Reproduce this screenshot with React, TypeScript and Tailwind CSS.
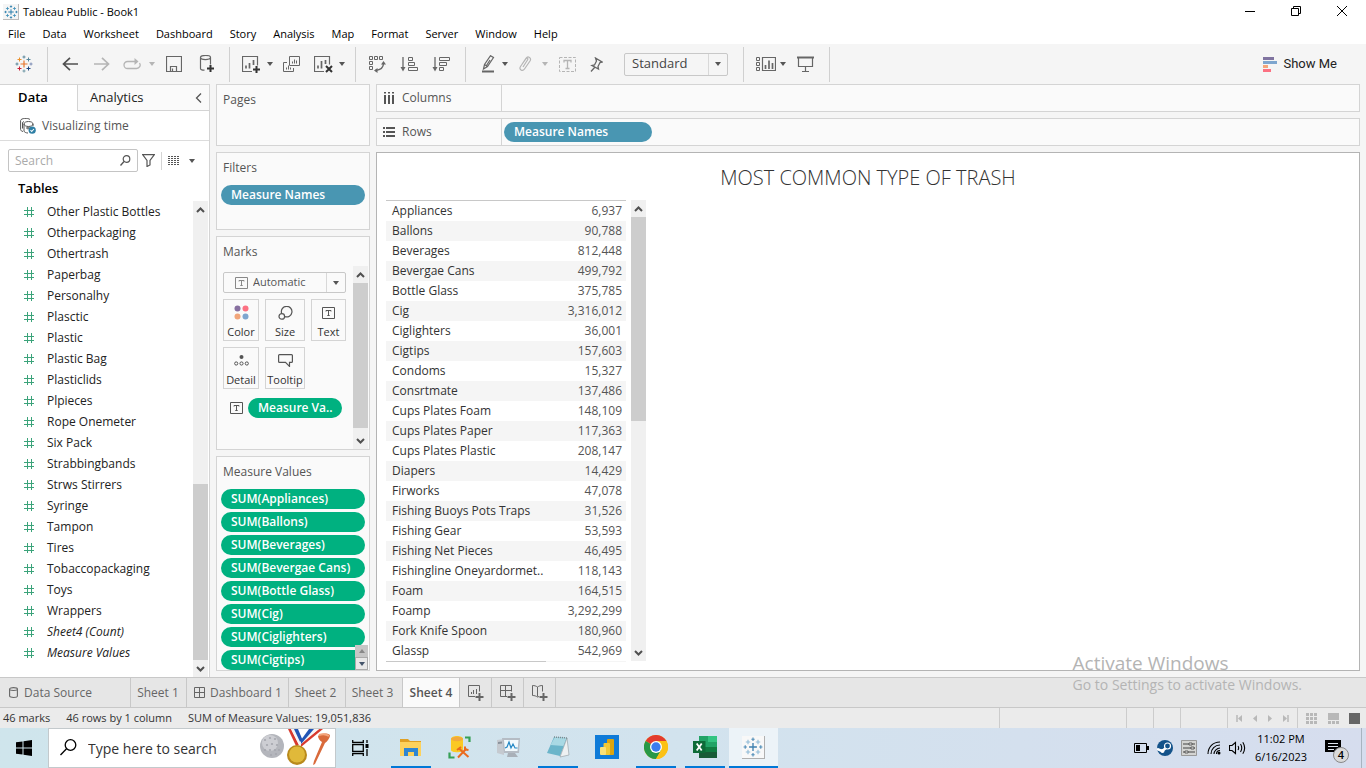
import React from "react";

const FIELDS = [
  "Other Plastic Bottles", "Otherpackaging", "Othertrash", "Paperbag", "Personalhy", "Plasctic", "Plastic",
  "Plastic Bag", "Plasticlids", "Plpieces", "Rope Onemeter", "Six Pack", "Strabbingbands", "Strws Stirrers",
  "Syringe", "Tampon", "Tires", "Tobaccopackaging", "Toys", "Wrappers",
];
const CALC_FIELDS = ["Sheet4 (Count)", "Measure Values"];

const ROWS: [string, string][] = [
  ["Appliances", "6,937"], ["Ballons", "90,788"], ["Beverages", "812,448"], ["Bevergae Cans", "499,792"],
  ["Bottle Glass", "375,785"], ["Cig", "3,316,012"], ["Ciglighters", "36,001"], ["Cigtips", "157,603"],
  ["Condoms", "15,327"], ["Consrtmate", "137,486"], ["Cups Plates Foam", "148,109"],
  ["Cups Plates Paper", "117,363"], ["Cups Plates Plastic", "208,147"], ["Diapers", "14,429"],
  ["Firworks", "47,078"], ["Fishing Buoys Pots Traps", "31,526"], ["Fishing Gear", "53,593"],
  ["Fishing Net Pieces", "46,495"], ["Fishingline Oneyardormet..", "118,143"], ["Foam", "164,515"],
  ["Foamp", "3,292,299"], ["Fork Knife Spoon", "180,960"], ["Glassp", "542,969"],
];

const MEASURES = ["Appliances", "Ballons", "Beverages", "Bevergae Cans", "Bottle Glass", "Cig", "Ciglighters", "Cigtips"];
const MENUS = ["File", "Data", "Worksheet", "Dashboard", "Story", "Analysis", "Map", "Format", "Server", "Window", "Help"];

type IconProps = { w: number; h: number; children: React.ReactNode; className?: string };
function Icon({ w, h, children, className = "" }: IconProps) {
  return (
    <svg width={w} height={h} viewBox={`0 0 ${w} ${h}`} fill="none" stroke="currentColor" aria-hidden="true" className={`shrink-0 ${className}`}>
      {children}
    </svg>
  );
}

function Caret({ className = "text-[#555]" }: { className?: string }) {
  return (
    <Icon w={6} h={4} className={className}>
      <path d="M0 0h6L3 4z" fill="currentColor" stroke="none" />
    </Icon>
  );
}

function Tool({ label, className, children }: { label: string; className: string; children: React.ReactNode }) {
  return (
    <button type="button" aria-label={label} className={`flex h-8 shrink-0 items-center justify-center ${className}`}>
      {children}
    </button>
  );
}

function Sep({ className = "" }: { className?: string }) {
  return <span className={`h-[35px] w-px shrink-0 bg-[#d0d0d0] ${className}`} />;
}

function Sparkle({ size, colors }: { size: number; colors: string[] }) {
  const [c, t, tr, r, br, b, bl, l, tl] = colors;
  return (
    <svg width={size} height={size} viewBox="0 0 18 18" fill="none" strokeWidth="1" aria-hidden="true" className="shrink-0">
      <path d="M9 5.500v7M5.500 9h7" stroke={c} strokeWidth="1.200" />
      <path d="M9 .5v3M7.500 2h3" stroke={t} />
      <path d="M13.500 2.500v4M11.500 4.500h4" stroke={tr} />
      <path d="M16 7.500v3M14.500 9h3" stroke={r} />
      <path d="M13.500 11.500v4M11.500 13.500h4" stroke={br} />
      <path d="M9 14.500v3M7.500 16h3" stroke={b} />
      <path d="M4.500 11.500v4M2.500 13.500h4" stroke={bl} />
      <path d="M2 7.500v3M.5 9h3" stroke={l} />
      <path d="M4.500 2.500v4M2.500 4.500h4" stroke={tl} />
    </svg>
  );
}

function TextIcon({ className = "text-[#555]" }: { className?: string }) {
  return (
    <Icon w={13} h={12} className={className}>
      <path d="M.5.5h12v11H.5z" />
      <path d="M4 4.500V3.500h5v1M6.500 3.500v5M5.300 8.500h2.400" />
    </Icon>
  );
}

function Chevron({ dir }: { dir: "up" | "down" }) {
  return (
    <Icon w={9} h={6} className="text-[#505050]">
      <path d={dir === "up" ? "M1 5l3.500-3.500L8 5" : "M1 1l3.500 3.500L8 1"} strokeWidth="2" />
    </Icon>
  );
}

function ScrollBar({ before = "grow-0", thumb, after = "grow-0" }: { before?: string; thumb: string; after?: string }) {
  return (
    <div className="flex w-[15px] shrink-0 flex-col bg-[#f0f0f0]">
      <button type="button" aria-label="Scroll up" className="flex h-[17px] shrink-0 items-center justify-center"><Chevron dir="up" /></button>
      <div className="flex min-h-0 flex-1 flex-col">
        <div className={before} />
        <div className={`bg-[#cdcdcd] ${thumb}`} />
        <div className={after} />
      </div>
      <button type="button" aria-label="Scroll down" className="flex h-[17px] shrink-0 items-center justify-center"><Chevron dir="down" /></button>
    </div>
  );
}

const CARD = "border border-[#d4d4d4] bg-[#fafafa]";
const PILL = "flex h-5 shrink-0 items-center rounded-full px-[10px] text-left text-xs font-semibold whitespace-nowrap text-white";

function TitleBar() {
  return (
    <header className="shrink-0 bg-white font-['Open_Sans',sans-serif] text-[11px] text-black">
      <div className="flex h-6 items-center">
        <span className="ml-[3px] flex h-4 w-4 items-center justify-center border-r border-b border-[#bbb] bg-[#f5f5f5]">
          <Sparkle size={14} colors={["#1f77a8", "#1f77a8", "#3d8fb8", "#1f77a8", "#3d8fb8", "#1f77a8", "#3d8fb8", "#1f77a8", "#3d8fb8"]} />
        </span>
        <h1 className="ml-1">Tableau Public - Book1</h1>
        <div className="ml-auto flex self-start">
          <button type="button" aria-label="Minimize" className="flex h-[22px] w-[46px] items-center justify-center"><Icon w={10} h={10}><path d="M0 5.500h10" /></Icon></button>
          <button type="button" aria-label="Restore" className="flex h-[22px] w-[45px] items-center justify-center"><Icon w={10} h={10}><path d="M.5 2.500h7v7h-7zM2.500 2.500v-2h7v7h-2" /></Icon></button>
          <button type="button" aria-label="Close" className="flex h-[22px] w-[48px] items-center justify-center"><Icon w={10} h={10}><path d="M0 0l10 10M10 0L0 10" /></Icon></button>
        </div>
      </div>
      <nav aria-label="Menu" className="flex h-5 items-center gap-[17px] px-2">
        {MENUS.map((m) => <button type="button" key={m}>{m}</button>)}
      </nav>
    </header>
  );
}

function Toolbar() {
  return (
    <div role="toolbar" className="flex h-10 shrink-0 items-center bg-[#f5f5f5] text-[#666]">
      <Tool label="Start page" className="w-[47px]">
        <Sparkle size={18} colors={["#e8762c", "#5b879b", "#59879b", "#7c8cb5", "#1f457e", "#7199a6", "#c72037", "#5b879b", "#eb912c"]} />
      </Tool>
      <Sep className="mr-[6px]" />
      <Tool label="Undo" className="w-8 text-[#505050]"><Icon w={16} h={14}><path d="M16 7H1.500M8 .8L1.500 7 8 13.200" strokeWidth="1.700" /></Icon></Tool>
      <Tool label="Redo" className="w-8 text-[#b5b5b5]"><Icon w={16} h={14}><path d="M0 7h14.500M8 .8L14.500 7 8 13.200" strokeWidth="1.700" /></Icon></Tool>
      <Tool label="Replay" className="w-7 text-[#b5b5b5]"><Icon w={18} h={12}><path d="M12 3.500H4.500a3.500 3.500 0 000 7h9a3.500 3.500 0 003-5.500" strokeWidth="1.300" /><path d="M11.500 0v7L15.500 3.500z" fill="currentColor" stroke="none" /></Icon></Tool>
      <Tool label="Replay options" className="w-3"><Caret className="text-[#b5b5b5]" /></Tool>
      <Tool label="Save" className="w-8"><Icon w={16} h={16}><path d="M.5.5h15v15H.5zM4.500 15.500v-5h6v5M6.500 12.500v3" strokeWidth="1.200" /></Icon></Tool>
      <Tool label="New data source" className="w-8"><Icon w={16} h={18}><path d="M2.500 2.500c0-2.700 10-2.700 10 0s-10 2.700-10 0v11c0 1 2 1.700 4 1.700M12.500 2.500v7" strokeWidth="1.200" /><path d="M12.500 10v7M9 13.500h7" strokeWidth="2" stroke="#333" /></Icon></Tool>
      <Sep className="mr-[5px] ml-[7px]" />
      <Tool label="New worksheet" className="w-8"><Icon w={19} h={17}><path d="M10 15.500H.5V.5h15v9" strokeWidth="1.200" /><path d="M4 12.500V9.500M7.500 12.500V7M11.500 9V4" strokeWidth="1.700" /><path d="M14.500 10v7M11 13.500h7" strokeWidth="2" stroke="#333" /></Icon></Tool>
      <Tool label="New worksheet options" className="w-[6px]"><Caret /></Tool>
      <Tool label="Duplicate" className="w-9"><Icon w={17} h={16}><path d="M6.500.5h10v9h-10zM4 6.500H.5v9h10V12" /><path d="M9.500 7.500v-2M11.500 7.500v-4M13.500 7.500v-3M3.500 13.500v-2M5.500 13.500v-4M7.500 13.500v-2" /></Icon></Tool>
      <Tool label="Clear sheet" className="w-7"><Icon w={19} h={17}><path d="M10 15.500H.5V.5h15v8" strokeWidth="1.200" /><path d="M4 12.500V9.500M7.500 12.500V5M11.500 8V4" strokeWidth="1.700" /><path d="M12 10l6 6M18 10l-6 6" strokeWidth="2" stroke="#333" /></Icon></Tool>
      <Tool label="Clear options" className="w-[10px]"><Caret /></Tool>
      <Sep className="mr-[5px] ml-2" />
      <Tool label="Swap rows and columns" className="w-8"><Icon w={17} h={17}><path d="M.5.5h3v3h-3zM5.500.5h3v3h-3zM10.500.5h3v3h-3zM.5 5.500h3v3h-3zM.5 10.500h3v3h-3z" /><path d="M14.500 7c0 4-3 7-8 7.500" strokeWidth="1.400" /><path d="M12 8.500L14.500 5 17 8.500zM8.500 12l-3.500 2.500L8.500 17z" fill="currentColor" stroke="none" /></Icon></Tool>
      <Tool label="Sort ascending" className="w-8"><Icon w={18} h={15}><path d="M3 0v11" strokeWidth="1.300" /><path d="M.5 10h5L3 14.500z" fill="currentColor" stroke="none" /><path d="M8.500.5h4v3h-4zM8.500 5.500h6v3h-6zM8.500 10.500h9v3h-9z" /></Icon></Tool>
      <Tool label="Sort descending" className="w-8"><Icon w={18} h={15}><path d="M3 0v11" strokeWidth="1.300" /><path d="M.5 10h5L3 14.500z" fill="currentColor" stroke="none" /><path d="M7.500.5h10v3h-10zM7.500 5.500h7v3h-7zM7.500 10.500h4v3h-4z" /></Icon></Tool>
      <Sep className="mx-2" />
      <Tool label="Highlight" className="w-7"><Icon w={13} h={18}><path d="M1.500 14l1-4.500L8.500.7l3 1.800-6 9L1.500 14zM2.500 9.500l3 2M8 5L4.500 10.500" strokeWidth="1.200" /><path d="M0 16.500h12" strokeWidth="2" /></Icon></Tool>
      <Tool label="Highlight options" className="w-[6px]"><Caret /></Tool>
      <Tool label="Group members" className="w-[34px] text-[#b5b5b5]"><Icon w={14} h={16}><path d="M5 11l4.500-7c1-1.500-.7-2.600-1.700-1.200L2.500 10.500c-2 3 2 5.500 4 2.500l5.500-8c1.800-3-2-5.500-4-2.700L3.500 9" strokeWidth="1.200" /></Icon></Tool>
      <Tool label="Group options" className="w-[6px]"><Caret className="text-[#b5b5b5]" /></Tool>
      <Tool label="Show mark labels" className="w-[38px] text-[#b5b5b5]"><Icon w={17} h={15}><path d="M.5.500h16v14H.5z" strokeDasharray="3 1.500" /><path d="M5 5.500V3.500h7v2M8.500 3.500v8M6.500 11.500h4" strokeWidth="1.300" /></Icon></Tool>
      <Tool label="Fix axes" className="w-5"><Icon w={13} h={15}><path d="M5.500 1l6.500 4-2 .5-2 4 .5 2.500L2 8.500l2.500-.5 2-4zM5 10l-4 4.500" strokeWidth="1.300" /></Icon></Tool>
      <div className="relative ml-[18px] flex h-[23px] w-[104px] items-center rounded-[2px] border border-[#c8c8c8]">
        <select aria-label="Fit" className="h-full w-full appearance-none bg-transparent pl-[7px] font-['Open_Sans',sans-serif] text-[13px] text-[#444]"><option>Standard</option></select>
        <span className="pointer-events-none absolute inset-y-0 right-0 flex w-[19px] items-center justify-center border-l border-[#d8d8d8]"><Caret /></span>
      </div>
      <Sep className="ml-[15px]" />
      <Tool label="Show or hide cards" className="ml-2 w-7"><Icon w={20} h={14}><path d="M.5.500h3v3h-3zM.5 5.500h3v3h-3zM.5 10.500h3v3h-3z" /><path d="M6.500.500h13v13h-13z" strokeWidth="1.200" /><path d="M9.500 12V8M13 12V3.500M16.500 12V6" strokeWidth="1.700" /></Icon></Tool>
      <Tool label="Card options" className="w-[6px]"><Caret /></Tool>
      <Tool label="Presentation mode" className="w-[38px]"><Icon w={17} h={16}><path d="M0 1.500h17" strokeWidth="2" /><path d="M1.500 2v8.500h14V2M8.500 10.500v5M5 15.500h7" strokeWidth="1.200" /></Icon></Tool>
      <Sep className="ml-[5px]" />
      <button type="button" className="mr-[29px] ml-auto flex items-center gap-[6px] font-[Roboto,sans-serif] text-[13px] text-[#222]">
        <Icon w={14} h={15}>
          <path d="M0 1.500h11" stroke="#8074a0" strokeWidth="3" /><path d="M0 5.500h14" stroke="#7ea6cf" strokeWidth="3" />
          <path d="M0 9.500h5" stroke="#f5a57a" strokeWidth="3" /><path d="M0 13.500h8" stroke="#fc7182" strokeWidth="3" />
        </Icon>
        Show Me
      </button>
    </div>
  );
}

function DataPane() {
  return (
    <aside className="flex w-[210px] shrink-0 flex-col border-t border-r border-[#d4d4d4] bg-white">
      <div className="flex h-[26px] shrink-0 text-[13px] text-black">
        <button type="button" className="w-[77px] shrink-0 pr-[11px] font-semibold">Data</button>
        <div className="flex flex-1 items-center justify-between border-b border-l border-[#d4d4d4] bg-[#fafafa] pr-[7px] pl-3">
          <button type="button" className="text-[#222]">Analytics</button>
          <button type="button" aria-label="Collapse pane"><Icon w={7} h={10} className="text-[#555]"><path d="M6 .5L1.500 5 6 9.500" strokeWidth="1.300" /></Icon></button>
        </div>
      </div>
      <div className="flex h-[30px] shrink-0 items-center gap-[6px] border-b border-[#dcdcdc] pl-5 text-xs text-[#555]">
        <Icon w={16} h={16}>
          <path d="M10 1.500C8-.2 1 0 .6 2.500v9c0 1 1 1.700 2.400 2M4 6c0-3.300 9-3.300 9 0s-9 3.300-9 0v7c0 1 2 2 4 2M13 6v2M6 10h4M8 8.500v3M4 3.500l-1.500 1v6" strokeWidth="1" />
          <circle cx="12.200" cy="12.200" r="3.600" fill="#2e7fa5" stroke="none" /><path d="M10.500 12.200l1.200 1.300 2.200-2.500" stroke="#fff" strokeWidth="1.100" />
        </Icon>
        <button type="button">Visualizing time</button>
      </div>
      <div className="flex h-[39px] shrink-0 items-center pl-2">
        <div className="relative flex">
          <input aria-label="Search" placeholder="Search" className="h-[23px] w-[130px] rounded-[2px] border border-[#c4c4c4] pr-6 pl-[6px] text-xs placeholder:text-[#aaa]" />
          <Icon w={11} h={11} className="pointer-events-none absolute top-[6px] right-[7px] text-[#555]"><circle cx="6.500" cy="4" r="3.300" strokeWidth="1.200" /><path d="M4 6.500L.5 10.500" strokeWidth="1.400" /></Icon>
        </div>
        <button type="button" aria-label="Filter fields" className="ml-1"><Icon w={13} h={13} className="text-[#555]"><path d="M.6.600h11.800L8 6.500v4.500l-3 1.500v-6z" strokeWidth="1.200" /></Icon></button>
        <span className="mx-[6px] h-[18px] w-px bg-[#d4d4d4]" />
        <button type="button" aria-label="View options" className="flex items-center gap-[9px]">
          <Icon w={12} h={9} className="text-[#555]"><path d="M0 .5h12M0 2.500h12M0 4.500h12M0 6.500h12M0 8.500h12" strokeDasharray="2 1" /></Icon>
          <Caret />
        </button>
      </div>
      <h2 className="h-[21px] shrink-0 pl-[18px] text-[13px] leading-[17px] font-semibold text-black">Tables</h2>
      <div className="flex min-h-0 flex-1 pr-px">
        <ul className="min-w-0 flex-1 overflow-hidden text-xs text-[#222]">
          {[...FIELDS, ...CALC_FIELDS].map((f) => (
            <li key={f} className="flex h-[21px] items-center gap-[13px] pl-6">
              <Icon w={10} h={10} className="text-[#3ba37a]"><path d="M3.500 0v10M7.500 0v10M0 3.500h10M0 7.500h10" /></Icon>
              <span className={CALC_FIELDS.includes(f) ? "italic" : ""}>{f}</span>
            </li>
          ))}
        </ul>
        <ScrollBar before="flex-[265]" thumb="flex-[176]" />
      </div>
    </aside>
  );
}

function MarkButton({ label, className, children }: { label: string; className: string; children: React.ReactNode }) {
  return (
    <button type="button" className={`flex h-[42px] shrink-0 flex-col items-center justify-end gap-[2px] border border-[#d4d4d4] text-[11px] text-[#333] ${className}`}>
      <span className="flex h-[17px] items-center text-[#555]">{children}</span>
      <span className="leading-[17px]">{label}</span>
    </button>
  );
}

function Cards() {
  return (
    <div className="flex w-[154px] shrink-0 flex-col gap-[6px] text-xs text-[#555]">
      <section className={`h-[62px] shrink-0 px-[6px] pt-[7px] ${CARD}`}><h2>Pages</h2></section>
      <section className={`h-[78px] shrink-0 px-1 pt-[7px] ${CARD}`}>
        <h2 className="pl-[2px]">Filters</h2>
        <button type="button" className={`mt-[9px] w-full bg-[#4996b2] ${PILL}`}>Measure Names</button>
      </section>
      <section className={`flex h-[214px] shrink-0 flex-col ${CARD}`}>
        <h2 className="flex h-[29px] shrink-0 items-center pl-[6px]">Marks</h2>
        <div className="flex min-h-0 flex-1 pr-px">
          <div className="flex min-w-0 flex-1 flex-col pt-[6px] pl-[6px]">
            <div className="relative flex h-[21px] w-[123px] items-center rounded-[2px] border border-[#c8c8c8]">
              <TextIcon className="pointer-events-none absolute left-[11px] text-[#888]" />
              <select aria-label="Mark type" className="h-full w-full appearance-none bg-transparent pl-[29px] text-[11px]"><option>Automatic</option></select>
              <span className="pointer-events-none absolute inset-y-0 right-0 flex w-[19px] items-center justify-center border-l border-[#d8d8d8]"><Caret /></span>
            </div>
            <div className="mt-[6px] flex gap-[6px]">
              <MarkButton label="Color" className="w-9">
                <svg width="15" height="15" viewBox="0 0 15 15" aria-hidden="true"><circle cx="3.500" cy="3.500" r="3" fill="#8770a0" /><circle cx="11.500" cy="3.500" r="3" fill="#fc7182" /><circle cx="3.500" cy="11.500" r="3" fill="#f1a57a" /><circle cx="11.500" cy="11.500" r="3" fill="#7ea6cf" /></svg>
              </MarkButton>
              <MarkButton label="Size" className="w-10"><Icon w={15} h={14}><path d="M3.600 7.200a5.300 5.300 0 113.200 3.400" strokeWidth="1.200" /><circle cx="3.800" cy="10.400" r="2.800" strokeWidth="1.200" /></Icon></MarkButton>
              <MarkButton label="Text" className="w-[35px]"><TextIcon /></MarkButton>
            </div>
            <div className="mt-[6px] flex gap-[6px]">
              <MarkButton label="Detail" className="w-9"><Icon w={15} h={11}><circle cx="7.500" cy="2" r="2" fill="currentColor" stroke="none" /><circle cx="2.200" cy="8.500" r="1.600" /><circle cx="7.500" cy="8.500" r="1.600" /><circle cx="12.800" cy="8.500" r="1.600" /></Icon></MarkButton>
              <MarkButton label="Tooltip" className="w-10"><Icon w={15} h={13}><path d="M1.500.600h12q.9 0 .9.900v6q0 .9-.9.900H11.500v4L7.500 8.400H1.500q-.9 0-.9-.9v-6q0-.9.900-.9z" strokeWidth="1.200" /></Icon></MarkButton>
            </div>
            <div className="mt-[9px] flex items-center gap-[5px] pl-[7px]">
              <TextIcon />
              <button type="button" className={`w-[94px] bg-[#00b180] ${PILL}`}>Measure Va..</button>
            </div>
          </div>
          <ScrollBar thumb="h-[145px]" />
        </div>
      </section>
      <section className={`relative flex min-h-0 flex-1 flex-col overflow-hidden ${CARD}`}>
        <h2 className="flex h-8 shrink-0 items-center pb-[2px] pl-[6px]">Measure Values</h2>
        <div className="flex min-h-0 flex-1 flex-col gap-[3px] overflow-hidden px-1">
          {MEASURES.map((m) => <button type="button" key={m} className={`bg-[#00b180] ${PILL}`}>SUM({m})</button>)}
        </div>
        <div className="absolute right-[1px] bottom-0 flex w-[13px] flex-col">
          <button type="button" aria-label="Scroll measures up" className="flex h-3 items-center justify-center bg-[#c6c6c6]"><Caret className="rotate-180 text-[#888]" /></button>
          <button type="button" aria-label="Scroll measures down" className="flex h-[13px] items-center justify-center border border-[#aaa] bg-[#e8e8e8]"><Caret className="text-[#44546a]" /></button>
        </div>
      </section>
    </div>
  );
}

function Worksheet() {
  return (
    <main className="mr-[6px] flex min-w-0 flex-1 flex-col gap-[6px] text-xs">
      <section className={`flex h-7 shrink-0 ${CARD}`}>
        <h2 className="flex w-[125px] shrink-0 items-center gap-[7px] border-r border-[#d4d4d4] pl-[7px] text-[#555]">
          <Icon w={11} h={12}><path d="M1 0v1.500M5 0v1.500M9 0v1.500M1 3v9M5 3v9M9 3v9" strokeWidth="2" /></Icon>Columns
        </h2>
      </section>
      <section className={`flex h-7 shrink-0 items-center ${CARD}`}>
        <h2 className="flex w-[125px] shrink-0 items-center gap-[7px] self-stretch border-r border-[#d4d4d4] pl-[6px] text-[#555]">
          <Icon w={12} h={10}><path d="M0 1h2M0 5h2M0 9h2M3 1h9M3 5h9M3 9h9" strokeWidth="2" /></Icon>Rows
        </h2>
        <button type="button" className={`ml-[2px] w-[148px] bg-[#4996b2] ${PILL}`}>Measure Names</button>
      </section>
      <section className="flex min-h-0 flex-1 flex-col border border-[#b4b4b4] bg-white">
        <h1 className="flex h-[47px] shrink-0 items-center justify-center pt-[2px] text-xl font-light text-[#333]">MOST COMMON TYPE OF TRASH</h1>
        <div className="mb-2 ml-[9px] flex min-h-0 flex-1">
          <div className="w-[240px] shrink-0 overflow-hidden border-t border-[#c8c8c8]">
            <table className="w-full table-fixed border-collapse">
              <tbody>
                {ROWS.map(([name, value]) => (
                  <tr key={name} className="h-5 even:bg-[#f5f5f5]">
                    <th scope="row" className="w-40 p-0 pl-[6px] text-left font-medium whitespace-nowrap text-[#333]">{name}</th>
                    <td className="p-0 pr-1 text-right text-[#555]">{value}</td>
                  </tr>
                ))}
              </tbody>
            </table>
            <div className="h-px bg-[#f5f5f5]"><div className="h-px w-40 bg-[#c8c8c8]" /></div>
          </div>
          <div className="mb-px ml-[5px] flex"><ScrollBar thumb="flex-[204]" after="flex-[223]" /></div>
        </div>
      </section>
    </main>
  );
}

const TAB = "flex h-full shrink-0 items-center border-r border-[#c8c8c8]";

function SheetTabs() {
  return (
    <nav aria-label="Sheets" className="flex h-[31px] shrink-0 border-y border-[#c8c8c8] bg-[#e6e6e6] text-xs text-[#666]">
      <button type="button" className={`w-[131px] gap-[6px] pl-[9px] ${TAB}`}>
        <Icon w={9} h={11}><path d="M.6 2c0-1.900 7.800-1.900 7.800 0v7c0 1.900-7.800 1.900-7.800 0zM.6 2c0 1.900 7.800 1.900 7.800 0" strokeWidth="1.100" /></Icon>Data Source
      </button>
      <button type="button" className={`w-14 justify-center pr-px ${TAB}`}>Sheet 1</button>
      <button type="button" className={`w-[102px] gap-[5px] pl-[7px] ${TAB}`}>
        <Icon w={11} h={11}><path d="M.5.500h10v10H.5zM5.500.500v10M.5 5.500h10" /></Icon>Dashboard 1
      </button>
      <button type="button" className={`w-[57px] justify-center pr-[3px] ${TAB}`}>Sheet 2</button>
      <button type="button" className={`w-[57px] justify-center pr-[3px] ${TAB}`}>Sheet 3</button>
      <button type="button" className={`w-[57px] justify-center bg-[#fafafa] font-semibold text-[#555] ${TAB}`}>Sheet 4</button>
      <button type="button" aria-label="New worksheet" className={`w-8 justify-center ${TAB}`}><Icon w={16} h={16}><path d="M7 11.500H.5V.500h11v6M3.500 9v-2M5.500 9V5M8.500 9v-5" /><path d="M11.500 8v8M7.500 12h8" strokeWidth="2" /></Icon></button>
      <button type="button" aria-label="New dashboard" className={`w-8 justify-center ${TAB}`}><Icon w={16} h={16}><path d="M7 11.500H.5V.500h11v6M5.500.500v11M.5 5.500h11" /><path d="M11.500 8v8M7.500 12h8" strokeWidth="2" /></Icon></button>
      <button type="button" aria-label="New story" className={`w-8 justify-center ${TAB}`}><Icon w={16} h={16}><path d="M.5.500c2 0 3.500.500 5 1.500 1.500-1 3-1.500 5-1.500v6M7 11.500l-1.500.5C4 11 2.500 10.500 .5 10.500V.500M5.500 2v9.500" /><path d="M11.500 8v8M7.500 12h8" strokeWidth="2" /></Icon></button>
    </nav>
  );
}

function StatusBar() {
  return (
    <footer className="flex h-5 shrink-0 items-center bg-[#ebebeb] pl-[3px] text-[11px] text-[#333]">
      <span>46 marks</span>
      <span className="ml-4">46 rows by 1 column</span>
      <span className="ml-4">SUM of Measure Values: 19,051,836</span>
      <div className="ml-auto flex h-full text-[#b8b8b8]">
        <span className="w-[127px] border-l border-[#ccc]" />
        <span className="w-[27px] border-l border-[#ccc]" />
        <span className="w-[27px] border-l border-[#ccc]" />
        <span className="w-[47px] border-l border-[#ccc]" />
        <div className="flex w-[71px] items-center justify-between border-x border-[#ccc] px-2">
          <button type="button" aria-label="First"><Icon w={7} h={7}><path d="M1 0v7" strokeWidth="1.500" /><path d="M6 0v7L2 3.500z" fill="currentColor" stroke="none" /></Icon></button>
          <button type="button" aria-label="Previous"><Icon w={5} h={7}><path d="M4 0v7L0 3.500z" fill="currentColor" stroke="none" /></Icon></button>
          <button type="button" aria-label="Next"><Icon w={5} h={7}><path d="M1 0v7l4-3.500z" fill="currentColor" stroke="none" /></Icon></button>
          <button type="button" aria-label="Last"><Icon w={7} h={7}><path d="M6 0v7" strokeWidth="1.500" /><path d="M1 0v7l4-3.500z" fill="currentColor" stroke="none" /></Icon></button>
        </div>
        <div className="flex w-[68px] items-center justify-between pr-[6px] pl-2">
          <button type="button" aria-label="Show sheet sorter"><Icon w={11} h={11}><path d="M0 1.500h11M0 5.500h11M0 9.500h11" strokeWidth="3" strokeDasharray="3 1" /></Icon></button>
          <button type="button" aria-label="Show filmstrip"><Icon w={11} h={11}><path d="M0 3.500h11" strokeWidth="7" /><path d="M0 9.500h11" strokeWidth="3" strokeDasharray="3 1" /></Icon></button>
          <button type="button" aria-label="Show tabs"><Icon w={11} h={11} className="text-[#666]"><path d="M0 5.500h11" strokeWidth="11" /></Icon></button>
        </div>
      </div>
    </footer>
  );
}

function TaskApp({ label, open, active, children }: { label: string; open?: boolean; active?: boolean; children: React.ReactNode }) {
  return (
    <button type="button" aria-label={label} className={`flex h-full w-[49px] shrink-0 flex-col items-center ${active ? "bg-[#ecf3f8]" : ""}`}>
      <span className="flex flex-1 items-center justify-center">{children}</span>
      <span className={`h-[2px] ${active ? "w-full" : "w-10"} ${open ? "bg-[#0078d7]" : ""}`} />
    </button>
  );
}

function Taskbar() {
  return (
    <div className="flex h-10 shrink-0 items-center bg-linear-to-r from-[#cfe5ec] via-[#d2e3ee] to-[#d6ddee] font-['Open_Sans',sans-serif] text-black">
      <button type="button" aria-label="Start" className="flex h-full w-12 shrink-0 items-center justify-center">
        <Icon w={16} h={16}><path d="M0 2.300l6.500-.9v6.100H0zM7.500 1.200L16 0v7.500H7.500zM0 8.500h6.500v6.100L0 13.700zM7.500 8.500H16V16l-8.500-1.200z" fill="currentColor" stroke="none" /></Icon>
      </button>
      <div className="relative flex h-full w-[288px] shrink-0 border border-[#c3c9cc] bg-white">
        <Icon w={17} h={17} className="pointer-events-none absolute top-[10px] left-[11px]"><circle cx="10.500" cy="6" r="5.300" strokeWidth="1.300" /><path d="M6.500 9.700L.5 16" strokeWidth="1.300" /></Icon>
        <input aria-label="Windows search" placeholder="Type here to search" className="h-full w-full bg-transparent pl-[39px] text-sm placeholder:text-[#333]" />
        <svg width="76" height="38" viewBox="0 0 76 38" aria-hidden="true" className="pointer-events-none absolute top-0 right-[2px]">
          <circle cx="15" cy="17" r="12" fill="#b4b6bc" /><circle cx="13" cy="14" r="8" fill="#cdced3" />
          <g fill="#a5a7ae"><circle cx="8" cy="11" r="1.100" /><circle cx="13" cy="9" r="1.100" /><circle cx="18" cy="10" r="1.100" /><circle cx="10" cy="16" r="1.100" /><circle cx="15" cy="15" r="1.100" /><circle cx="20" cy="16" r="1.100" /><circle cx="8" cy="21" r="1.100" /><circle cx="13" cy="21" r="1.100" /><circle cx="18" cy="21" r="1.100" /><circle cx="22" cy="21" r="1.100" /><circle cx="14" cy="26" r="1.100" /><circle cx="19" cy="25" r="1.100" /></g>
          <path d="M31 0h3l8 16-3 1z" fill="#d83a2e" /><path d="M34 0h3l7 14-2 2z" fill="#f5f5f5" /><path d="M37 0h4l5 12-2 3z" fill="#2255b5" />
          <path d="M66 0h-4L44 14v4z" fill="#d83a2e" /><path d="M62 0h-5L43 13v3z" fill="#f5f5f5" /><path d="M57 0h-5l-8 11v4z" fill="#2255b5" />
          <circle cx="40" cy="26" r="10" fill="#b98a1c" /><circle cx="40" cy="25.500" r="8" fill="#e0b93a" />
          <path d="M61 7c3-3 9-3 12-1 0 3-3 7-5 8L58 35l-2 1 1-4 8-19c-2-1-4-4-4-6z" fill="#d96a3b" /><path d="M62 6c3-1 7-1 10 1" stroke="#f3a57c" strokeWidth="2" fill="none" />
        </svg>
      </div>
      <button type="button" aria-label="Task View" className="flex h-full w-[50px] shrink-0 items-center justify-center pr-[2px]">
        <Icon w={17} h={16}><path d="M.7 0v2.500h10.600V0M.7 16v-2.500h10.600V16M.7 4.700h10.600v6.600H.7zM15 0v3M15 9v7" strokeWidth="1.300" /><path d="M15 4v4" strokeWidth="3" /></Icon>
      </button>
      <TaskApp label="File Explorer" open>
        <svg width="22" height="19" viewBox="0 0 22 19"><path d="M0 1h8l2 2h11v4H0z" fill="#e0a023" /><path d="M0 4h21v14H0z" fill="#fdd25c" /><path d="M4 18v-8h14v8h-4v-4H8v4z" fill="#2f86d2" /></svg>
      </TaskApp>
      <TaskApp label="Database tools">
        <svg width="23" height="23" viewBox="0 0 23 23"><path d="M3 3c0-4 12-4 12 0v11c0 3-12 3-12 0z" fill="#fbc924" /><ellipse cx="9" cy="3" rx="6" ry="2.200" fill="#f2a93c" /><path d="M17 1.500h4.500V6M6.500 21.500H1.500v-5" stroke="#36a055" strokeWidth="2.200" fill="none" /><path d="M11 12.500l9.500 8.500M18.500 12.500L10 21.500" stroke="#ea6b1f" strokeWidth="2" /><path d="M9 14l4-3M17 10.500v3l3.500.5" stroke="#ea6b1f" strokeWidth="2" fill="none" /></svg>
      </TaskApp>
      <TaskApp label="Performance Monitor">
        <svg width="24" height="21" viewBox="0 0 24 21"><path d="M0 3l7-1v16l-7-2z" fill="#c5cad0" /><path d="M1 5l4-.5v2L1 7z" fill="#8a929b" /><path d="M5 1h18l-1 15H7z" fill="#b5bcc4" /><path d="M7 3h14.500l-1 11H8z" fill="#f2fafd" /><path d="M8 11l2-1 2-5 2 6 2-4 2 4h2.500" stroke="#2387c4" strokeWidth="1.200" fill="none" /><path d="M11 16h7l3 4H10z" fill="#a9b0b8" /></svg>
      </TaskApp>
      <TaskApp label="Notepad" open>
        <svg width="24" height="22" viewBox="0 0 24 22"><path d="M8 1l13 1-7 18L1 17z" fill="#6bb5ca" /><path d="M9 1l11.500 1-3 8L4.500 9z" fill="#a9d9e4" /><path d="M21 2l2 17-9 2z" fill="#eef1f2" stroke="#8f999d" strokeWidth=".6" /><path d="M8 1l13 1" stroke="#7d8b90" strokeWidth="1.500" strokeDasharray="1 1" /></svg>
      </TaskApp>
      <TaskApp label="Power BI">
        <svg width="24" height="24" viewBox="0 0 24 24"><path d="M0 0h24v24H0z" fill="#0f7bd8" /><rect x="12" y="4" width="7" height="16" rx="1" fill="#dca50f" /><rect x="8.500" y="8" width="6.500" height="12" rx="1" fill="#f2c833" /><rect x="5" y="12" width="6" height="8" rx="1" fill="#fae178" /></svg>
      </TaskApp>
      <TaskApp label="Google Chrome" open>
        <svg width="24" height="24" viewBox="0 0 24 24"><circle cx="12" cy="12" r="12" fill="#fbc116" /><path d="M12 12L1.600 6A12 12 0 0122.400 6H12z" fill="#e33b2e" /><path d="M1.600 6A12 12 0 0012 24l5.200-9L12 12z" fill="#279847" /><path d="M12 6h10.400A12 12 0 0112 24l5.200-9z" fill="#fbc116" /><circle cx="12" cy="12" r="6" fill="#fff" /><circle cx="12" cy="12" r="4.700" fill="#3b7ded" /></svg>
      </TaskApp>
      <TaskApp label="Excel" open>
        <svg width="24" height="22" viewBox="0 0 24 22"><path d="M6 0h18v22H6z" fill="#21a366" /><path d="M15 0h9v6h-9z" fill="#33c481" /><path d="M6 11h9v11H6zM15 11h9v5h-9z" fill="#107c41" /><path d="M6 16h18v6H6z" fill="#185c37" /><path d="M0 5h12.500v12H0z" fill="#0d6b38" /><path d="M3.700 7.500l5 7M8.700 7.500l-5 7" stroke="#fff" strokeWidth="1.800" /></svg>
      </TaskApp>
      <TaskApp label="Tableau Public" open active>
        <span className="flex h-[23px] w-[23px] items-center justify-center border-r border-b border-[#b0b0b0] bg-[#f8f8f8]">
          <Sparkle size={20} colors={["#3c7fae", "#4f8db8", "#8fbad6", "#4f8db8", "#8fbad6", "#4f8db8", "#8fbad6", "#4f8db8", "#8fbad6"]} />
        </span>
      </TaskApp>
      <div className="ml-auto flex h-full shrink-0 items-center">
        <Icon w={15} h={10}><path d="M.5.500h12v9H.5z" /><path d="M2 2h4v6H2zM13 3h2v4h-2z" fill="currentColor" stroke="none" /></Icon>
        <svg width="16" height="16" viewBox="0 0 16 16" aria-hidden="true" className="ml-2"><circle cx="8" cy="8" r="8" fill="#14538a" /><path d="M0 9l5 2 4-3" stroke="#fff" strokeWidth="2.500" fill="none" /><circle cx="10.500" cy="6" r="3" fill="#14538a" stroke="#fff" strokeWidth="1.200" /><circle cx="5.500" cy="11" r="2" fill="#fff" /></svg>
        <svg width="16" height="16" viewBox="0 0 16 16" aria-hidden="true" className="ml-2"><path d="M0 0h16v16H0z" fill="#d4d4d2" /><path d="M.5.500h15v15H.5z" fill="none" stroke="#999" /><path d="M2 4h12M2 8h12M2 12h12" stroke="#444" /><path d="M8 3h3v2H8zM10 7h3v2h-3zM4 11h3v2H4z" fill="#eee" stroke="#444" strokeWidth=".8" /></svg>
        <Icon w={14} h={14} className="ml-[10px]"><path d="M1 13C1 6 6 1 13 1M4 13c0-5 4-9 9-9M7 13c0-3 3-6 6-6M9.500 13c0-2 1.500-3.500 3.500-3.500" strokeWidth="1.100" /><circle cx="12" cy="12" r="1.500" fill="currentColor" stroke="none" /></Icon>
        <Icon w={17} h={14} className="ml-2"><path d="M.5 4.500h2.500L6.500 1.500v11L3 9.500H.5zM9 5q1.300 2 0 4M11.500 3q2.500 4 0 8M13.800 1.200q3.700 5.800 0 11.600" strokeWidth="1.100" /></Icon>
        <div className="ml-2 w-[54px] text-center text-[11px] leading-[18px] whitespace-nowrap"><p>11:02 PM</p><p>6/16/2023</p></div>
        <button type="button" aria-label="Notifications" className="relative ml-[17px] h-10 w-9">
          <Icon w={16} h={16} className="absolute top-3 left-0"><path d="M0 0h16v12h-3v4l-4-4H0z" fill="currentColor" stroke="none" /><path d="M3 3.500h10M3 6.500h10M3 9.500h6" stroke="#dfe5ee" /></Icon>
          <span className="absolute top-[19px] left-2 flex h-4 w-4 items-center justify-center rounded-full border border-[#888] bg-[#dadada] text-[11px] font-semibold">4</span>
        </button>
        <span className="mr-1 h-full w-px bg-[#a8b4c0]" />
      </div>
    </div>
  );
}

export default function App() {
  return (
    <div className="relative flex h-screen flex-col overflow-hidden bg-[#f5f5f5] font-['Open_Sans',sans-serif]">
      <TitleBar />
      <Toolbar />
      <div className="flex min-h-0 flex-1 gap-[6px]">
        <DataPane />
        <div className="flex min-w-0 flex-1 gap-[6px] pb-[6px]">
          <Cards />
          <Worksheet />
        </div>
      </div>
      <SheetTabs />
      <StatusBar />
      <Taskbar />
      <div className="pointer-events-none absolute right-[64px] bottom-[73px] text-[#b4b4b4]">
        <p className="text-[19px] leading-[24px]">Activate Windows</p>
        <p className="text-sm leading-[20px]">Go to Settings to activate Windows.</p>
      </div>
    </div>
  );
}
